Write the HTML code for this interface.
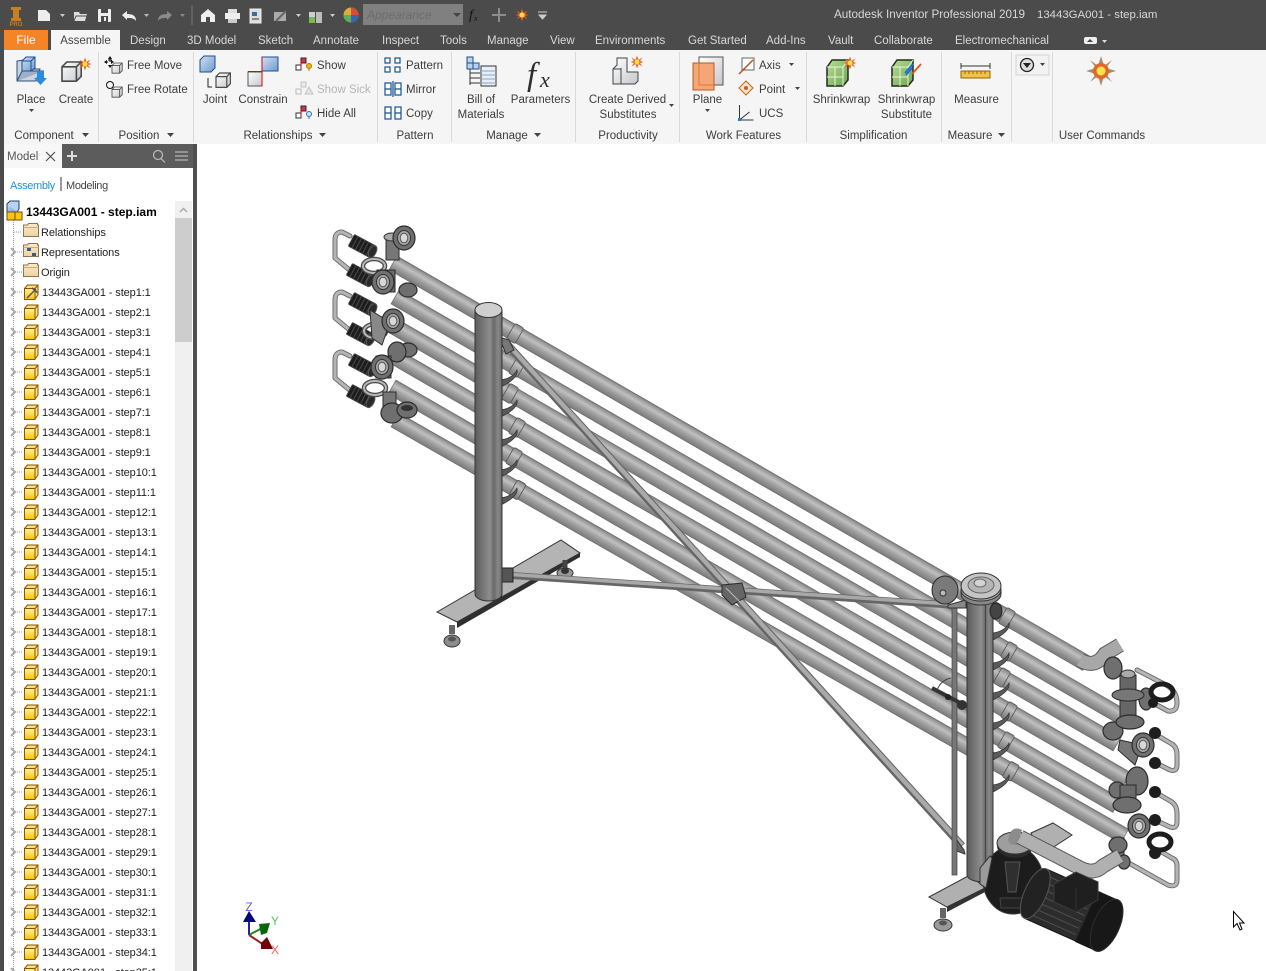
<!DOCTYPE html>
<html><head><meta charset="utf-8"><title>Autodesk Inventor</title>
<style>
html,body{margin:0;padding:0;background:#fff;overflow:hidden}
svg{display:block;font-family:"Liberation Sans",sans-serif}
.t{font-size:11.500px;fill:#3c3c3c}
.m{text-anchor:middle}
.tb{font-size:11.500px;fill:#d8d8d8}
.s{font-size:11px;fill:#1e1e1e;letter-spacing:-.1px}
.u{fill:none;stroke:#666;stroke-width:5;stroke-linejoin:round;stroke-linecap:round}
.u2{fill:none;stroke:#b4b4b4;stroke-width:3.200;stroke-linejoin:round;stroke-linecap:round}
.fl{fill:#6f6f6f;stroke:#2c2c2c;stroke-width:1.200}
.sep{stroke:#d9d9d9;stroke-width:1}
</style></head><body>
<svg width="1266" height="971" viewBox="0 0 1266 971" xmlns="http://www.w3.org/2000/svg">
<defs>
<linearGradient id="pg" x1="0" y1="0" x2="0" y2="1"><stop offset="0" stop-color="#787878"/><stop offset=".12" stop-color="#9a9a9a"/><stop offset=".36" stop-color="#c0c0c0"/><stop offset=".55" stop-color="#a6a6a6"/><stop offset=".8" stop-color="#8c8c8c"/><stop offset="1" stop-color="#7a7a7a"/></linearGradient>
<linearGradient id="cg" x1="0" y1="0" x2="1" y2="0"><stop offset="0" stop-color="#5c5c5c"/><stop offset=".3" stop-color="#777"/><stop offset=".55" stop-color="#8e8e8e"/><stop offset=".7" stop-color="#6a6a6a"/><stop offset=".85" stop-color="#888"/><stop offset="1" stop-color="#6c6c6c"/></linearGradient>
<linearGradient id="yg" x1="0" y1="0" x2="0" y2="1"><stop offset="0" stop-color="#fff3a0"/><stop offset="1" stop-color="#f5c400"/></linearGradient>
<linearGradient id="fg" x1="0" y1="0" x2="0" y2="1"><stop offset="0" stop-color="#fbe9c8"/><stop offset="1" stop-color="#efd3a2"/></linearGradient>
<linearGradient id="gb" x1="0" y1="0" x2="1" y2="1"><stop offset="0" stop-color="#fff"/><stop offset="1" stop-color="#c4c7cc"/></linearGradient>
<linearGradient id="bl" x1="0" y1="0" x2="1" y2="1"><stop offset="0" stop-color="#cfe0f3"/><stop offset="1" stop-color="#6e9ad0"/></linearGradient>
<linearGradient id="gn" x1="0" y1="0" x2="1" y2="1"><stop offset="0" stop-color="#b8dc98"/><stop offset="1" stop-color="#6fa54e"/></linearGradient>
<g id="k"><path d="M11 -4l4 4l-4 4" fill="none" stroke="#a8a8a8" stroke-width="2"/><path d="M17 0h5" stroke="#999" stroke-dasharray="1 1" fill="none"/></g>
<g id="cube"><path d="M24.500 -3.500l3-3.500h10.500v10l-3 4z" fill="#f9e27a" stroke="#8f5100"/><rect x="24.500" y="-3.500" width="10.500" height="11" fill="url(#yg)" stroke="#8f5100"/><path d="M35 -3.500l3-3.500" stroke="#8f5100"/></g>
<g id="fold"><path d="M23.500 -4.500v-2.500h4l1 -1.500h9v1.500h1v11.500h-15z" fill="url(#fg)" stroke="#8c7550"/><path d="M23.500 -4.500h15" stroke="#c9ad7d"/></g>
<g id="spark"><path d="M0-6.500L1.500-2L5.500-4.500L3-1L6.500 0L3 1L5.500 4.500L1.500 2L0 6.500L-1.500 2L-5.500 4.500L-3 1L-6.500 0L-3-1L-5.500-4.500L-1.500-2z" fill="#ef5a1e"/><circle r="2.500" fill="#ffe23d"/></g>
<g id="cb"><path d="M0 3l3-3h9v9l-3 3H0z" fill="url(#gb)" stroke="#4a4a4a"/><path d="M0 3h9v9M9 3l3-3" fill="none" stroke="#4a4a4a"/></g>
<g id="bk"><rect x="-12" y="-6.500" width="24" height="13" rx="1" fill="#1d1d1d" stroke="#3e3e3e"/><path d="M-8-6.500v13M-4-6.500v13M0-6.500v13M4-6.500v13M8-6.500v13" stroke="#4a4a4a" stroke-width="1"/><ellipse cx="12" cy="0" rx="3.500" ry="6.500" fill="#2a2a2a" stroke="#555"/></g>
<g id="flg"><ellipse rx="11" ry="12" class="fl"/><ellipse rx="6.500" ry="7.500" fill="#a8a8a8" stroke="#333"/><ellipse rx="3.800" ry="4.800" fill="#d8d8d8" stroke="#555"/></g>
<g id="ring"><ellipse rx="11" ry="7" fill="none" stroke="#4a4a4a" stroke-width="4.500"/><ellipse rx="11" ry="7" fill="none" stroke="#b8b8b8" stroke-width="2"/></g>
<g id="blring"><ellipse rx="11" ry="8" fill="none" stroke="#1d1d1d" stroke-width="5"/></g>
<g id="sl"><rect x="136" y="-9" width="10" height="18" rx="2" fill="url(#pg)" stroke="#555" stroke-width=".8"/><rect x="704" y="-9" width="10" height="18" rx="2" fill="url(#pg)" stroke="#555" stroke-width=".8"/></g>
<path id="rb" d="M0 0q12 -2 16 -10q2 8 -16 17z" fill="#5a5a5a" stroke="#2f2f2f" stroke-width=".7"/>
</defs>

<!-- chrome -->
<rect width="1266" height="971" fill="#fff"/>
<rect width="1266" height="50" fill="#4b4b4b"/>
<rect x="0" y="0" width="4" height="971" fill="#4b4b4b"/>
<rect x="4" y="50" width="1262" height="94" fill="#f5f5f5"/>
<rect x="4" y="30" width="44" height="20" fill="#f58426"/>
<rect x="51" y="30" width="69" height="20" fill="#f5f5f5"/>
<text x="26" y="44" class="m" font-size="12" fill="#fff">File</text>
<text x="85.500" y="44" class="m" font-size="11.500" fill="#444">Assemble</text>
<g class="tb">
<text x="130" y="44">Design</text><text x="187" y="44">3D Model</text><text x="258" y="44">Sketch</text><text x="313" y="44">Annotate</text><text x="382" y="44">Inspect</text><text x="440" y="44">Tools</text><text x="487" y="44">Manage</text><text x="550" y="44">View</text><text x="595" y="44">Environments</text><text x="688" y="44">Get Started</text><text x="766" y="44">Add-Ins</text><text x="828" y="44">Vault</text><text x="874" y="44">Collaborate</text><text x="955" y="44">Electromechanical</text>
<text x="834" y="18" font-size="11.700">Autodesk Inventor Professional 2019</text><text x="1037" y="18" font-size="11.400">13443GA001 - step.iam</text>
</g>
<rect x="1084" y="37" width="13" height="7" rx="2" fill="#eee"/><path d="M1087 42l3-3l3 3z" fill="#444"/><path d="M1102 40h5l-2.500 3z" fill="#ddd"/>

<!-- quick access -->
<path d="M11 7h10v3h-2v8h2v3h-10v-3h2v-8h-2z" fill="#c87f1e"/><text x="16" y="26" class="m" font-size="6" font-weight="bold" fill="#c87f1e">PRO</text>
<path d="M38 10h8l4 4v7h-12z" fill="#eee"/><path d="M60 14h5l-2.500 3z" fill="#ccc"/>
<path d="M74 12h5l1 2h7l-2 7h-11z" fill="#ddd"/><path d="M74 21l2-5h12" fill="none" stroke="#4b4b4b"/>
<rect x="98" y="9" width="13" height="13" rx="1" fill="#eee"/><rect x="101" y="9" width="7" height="4" fill="#4b4b4b"/><rect x="101" y="16" width="7" height="6" fill="#4b4b4b"/><rect x="104" y="17" width="2" height="4" fill="#eee"/>
<path d="M122 15l5-4v3c6 0 9 2 9 7c-2-3-5-3-9-3v2z" fill="#eee"/><path d="M144 14h5l-2.500 3z" fill="#bbb"/>
<path d="M172 15l-5-4v3c-6 0-9 2-9 7c2-3 5-3 9-3v2z" fill="#8a8a8a"/><path d="M180 14h5l-2.500 3z" fill="#8a8a8a"/>
<path d="M192 5v20" stroke="#777"/>
<path d="M201 15l7-6l7 6v7h-5v-5h-4v5h-5z" fill="#eee"/>
<rect x="225" y="13" width="15" height="6" fill="#eee"/><rect x="228" y="9" width="9" height="4" fill="#ddd"/><rect x="228" y="19" width="9" height="4" fill="#ccc"/>
<rect x="250" y="9" width="11" height="14" fill="#ddd" stroke="#eee"/><rect x="252" y="12" width="5" height="4" fill="#3e6c9e"/><path d="M252 19h7" stroke="#333"/>
<path d="M274 12h12v9h-12z" fill="#aaa"/><path d="M276 21l10-10" stroke="#666" stroke-width="2"/><path d="M296 14h5l-2.500 3z" fill="#ccc"/>
<rect x="309" y="12" width="6" height="5" fill="#cfcfcf"/><rect x="309" y="17" width="6" height="6" fill="#7db94d"/><rect x="316" y="12" width="6" height="11" fill="#eee" opacity=".7"/><path d="M330 14h5l-2.500 3z" fill="#ccc"/>
<circle cx="351" cy="15" r="7.500" fill="#d3b436"/><path d="M351 15V7.500a7.500 7.500 0 0 1 7.500 7.500z" fill="#d94a3a"/><path d="M351 15h7.500a7.500 7.500 0 0 1-7.500 7.500z" fill="#3565b5"/><path d="M351 15v7.500a7.500 7.500 0 0 1-7.500-7.500z" fill="#5fae57"/>
<rect x="363" y="4" width="100" height="21" fill="#808080"/><text x="367" y="19" font-size="12" font-style="italic" fill="#6c6c6c">Appearance</text><path d="M453 13h8l-4 4z" fill="#444"/>
<text x="469" y="19" font-size="14" font-style="italic" font-family="Liberation Serif" fill="#111">f</text><text x="474" y="21" font-size="8" font-style="italic" font-family="Liberation Serif" fill="#111">x</text>
<path d="M499 8v14M492 15h14" stroke="#8c8c8c" stroke-width="2"/>
<use href="#spark" x="522" y="15"/>
<path d="M538 12h9M539 15h7l-3.500 4z" stroke="#ccc" fill="#ccc"/>

<!-- ribbon separators -->
<g class="sep"><path d="M98.500 52v90M193.500 52v90M377.500 52v90M451.500 52v90M575.500 52v90M679.500 52v90M806.500 52v90M941.500 52v90M1011.500 52v90M1052.500 52v90"/></g>

<!-- ribbon labels -->
<g class="t">
<text x="31" y="103" class="m">Place</text><text x="76" y="103" class="m">Create</text>
<text x="127" y="69">Free Move</text><text x="127" y="93">Free Rotate</text>
<text x="215" y="103" class="m">Joint</text><text x="263" y="103" class="m">Constrain</text>
<text x="317" y="69">Show</text><text x="317" y="93" style="fill:#b5b5b5">Show Sick</text><text x="317" y="117">Hide All</text>
<text x="406" y="69">Pattern</text><text x="406" y="93">Mirror</text><text x="406" y="117">Copy</text>
<text x="481" y="103" class="m">Bill of</text><text x="481" y="118" class="m">Materials</text><text x="540.500" y="103" class="m">Parameters</text>
<text x="627.500" y="103" class="m">Create Derived</text><text x="628" y="118" class="m">Substitutes</text>
<text x="707.500" y="103" class="m">Plane</text>
<text x="759" y="69">Axis</text><text x="759" y="93">Point</text><text x="759" y="117">UCS</text>
<text x="841.500" y="103" class="m">Shrinkwrap</text><text x="906.500" y="103" class="m">Shrinkwrap</text><text x="906.500" y="118" class="m">Substitute</text>
<text x="976.500" y="103" class="m">Measure</text>
<text x="44" y="139" class="m">Component</text><text x="139" y="139" class="m">Position</text><text x="278" y="139" class="m">Relationships</text><text x="415" y="139" class="m">Pattern</text><text x="507" y="139" class="m">Manage</text><text x="628" y="139" class="m">Productivity</text><text x="743.500" y="139" class="m">Work Features</text><text x="873.500" y="139" class="m">Simplification</text><text x="970" y="139" class="m">Measure</text><text x="1102" y="139" class="m">User Commands</text>
</g>
<g fill="#444"><path d="M82 133h7l-3.500 4zM167 133h7l-3.500 4zM319 133h7l-3.500 4zM534 133h7l-3.500 4zM998 133h7l-3.500 4z"/><path d="M29 109h5l-2.500 3zM705 109h5l-2.500 3zM669 104h5l-2.500 3zM789 63h5l-2.500 3zM795 87h5l-2.500 3z"/></g>

<!-- ribbon icons -->
<path d="M17 74v-13l7 -1v9h16l-4 12h-19z" fill="#cbd5e2" stroke="#2b4d7a"/><path d="M17 81l5-10h22" fill="#9fb0c4" stroke="#2b4d7a"/>
<path d="M22 61l4-4h9v11l-4 3h-9z" fill="url(#bl)" stroke="#1f4f8e"/><path d="M22 61h9v10M31 61l4-4" fill="none" stroke="#1f4f8e"/>
<rect x="37" y="71" width="7" height="8" fill="#2b8be0"/><path d="M34 78h13l-6.500 7z" fill="#2b8be0"/>
<use href="#cb" transform="translate(62 62) scale(1.600)"/><use href="#spark" x="85" y="64"/>
<path d="M108 60h4M110 58v4M106 62l2 0" stroke="#111"/><path d="M110 56l2 3h-4zM110 68l2-3h-4zM104 62l3-2v4zM114 62l-3-2v4z" fill="#111"/><use href="#cb" transform="translate(112 63) scale(.85)"/>
<circle cx="110" cy="85" r="3.500" fill="none" stroke="#111"/><use href="#cb" transform="translate(112 87) scale(.85)"/>
<path d="M200 60l4-4h11v12l-4 4h-11z" fill="url(#bl)" stroke="#1f4f8e"/><path d="M208 78v9h4" stroke="#222" fill="none"/><use href="#cb" transform="translate(216 73) scale(1.200)"/>
<rect x="262" y="57" width="16" height="14" fill="url(#bl)" stroke="#1f4f8e"/><rect x="248" y="72" width="14" height="14" fill="url(#gb)" stroke="#555"/><path d="M262 57v29M248 71.500h14" stroke="#e00000" fill="none"/>
<g><rect x="296" y="65" width="5" height="5" fill="#fff" stroke="#333"/><rect x="301" y="58" width="5" height="5" fill="#d33" stroke="#225"/><path d="M301 67v-6" stroke="#c00"/><circle cx="309" cy="66" r="2.500" fill="#f4b400" stroke="#b97600"/><path d="M309 69v2" stroke="#b97600"/></g>
<g opacity=".3"><rect x="296" y="89" width="5" height="5" fill="#fff" stroke="#333"/><rect x="301" y="82" width="5" height="5" fill="#ccc" stroke="#555"/><path d="M309 87l4 7h-8z" fill="#bbb" stroke="#555"/></g>
<g><rect x="296" y="113" width="5" height="5" fill="#fff" stroke="#333"/><rect x="301" y="106" width="5" height="5" fill="#d33" stroke="#225"/><path d="M301 115v-6" stroke="#c00"/><circle cx="309" cy="114" r="2.500" fill="#cfe2f7" stroke="#2d73b5"/><path d="M309 117v2" stroke="#2d73b5"/></g>
<g fill="#fff" stroke="#14508f" stroke-width="1.200"><rect x="385" y="58" width="5" height="5"/><rect x="395" y="58" width="5" height="5"/><rect x="385" y="67" width="5" height="5"/><rect x="395" y="67" width="5" height="5"/><rect x="385" y="83" width="6" height="12"/><rect x="395" y="83" width="6" height="12"/><path d="M385 89h6M395 89h6M393 81v16" fill="none"/><rect x="385" y="107" width="6" height="12"/><rect x="395" y="107" width="6" height="12"/><path d="M385 113h6M395 113h6" fill="none"/></g>
<rect x="467" y="57" width="6" height="6" fill="#b9d2ef" stroke="#1f4f8e"/><rect x="467" y="63" width="6" height="6" fill="#b9d2ef" stroke="#1f4f8e"/><rect x="473" y="63" width="6" height="6" fill="#b9d2ef" stroke="#1f4f8e"/><path d="M470 69v16M470 73h10M470 78h10M470 83h10" stroke="#333" fill="none"/><rect x="481" y="66" width="15" height="20" fill="#e7eff8" stroke="#333"/><path d="M481 71h15M481 75h15M481 79h15M481 83h15" stroke="#8aa5c5"/>
<text x="527" y="85" font-family="Liberation Serif" font-size="33" font-style="italic" fill="#2d2d2d">f</text><text x="540" y="87" font-family="Liberation Serif" font-size="22" font-style="italic" fill="#2d2d2d">x</text>
<path d="M613 69l4-4v-7h10v14h11v9l-3 3h-22z" fill="url(#gb)" stroke="#444"/><path d="M613 69h8v-1M621 69v15" fill="none" stroke="#444"/><use href="#spark" x="637" y="62"/>
<rect x="699" y="57" width="24" height="28" fill="url(#gb)" stroke="#555"/><rect x="693" y="63" width="21" height="27" fill="#f5a677" stroke="#bb5a1a"/><path d="M699 63v22h15" fill="none" stroke="#d47a3a"/>
<rect x="742" y="58" width="12" height="12" fill="#fff" stroke="#666"/><path d="M739 74l14-14" stroke="#b0531e" stroke-width="1.500"/>
<path d="M746 81l7 7l-7 7l-7-7z" fill="#fbe4cc" stroke="#c2621b"/><circle cx="746" cy="88" r="2" fill="#c2621b"/>
<path d="M739.500 105v15h14M739.500 120l10-8" fill="none" stroke="#333"/><rect x="738" y="118" width="3" height="3" fill="#1e7fd6"/>
<g id="sw"><path d="M827 67l5-7h16v20l-5 6h-16z" fill="url(#gn)" stroke="#1c2e14" stroke-width="1.500"/><path d="M827 77h16M835 67v19M843 67v19M827 67h16M843 67l5-7" fill="none" stroke="#e8f4dc"/></g><use href="#spark" x="850" y="63"/>
<use href="#sw" x="65"/><path d="M906 75l6-7M905 73l8 -9" stroke="#1e6fd6" stroke-width="1.800"/><path d="M912 74l9-10" stroke="#e0541e" stroke-width="1.800"/>
<path d="M961 63v6M990 63v6M961 66h29" fill="none" stroke="#333"/><rect x="961" y="71" width="29" height="7" fill="#f2c14a" stroke="#8c6500"/><path d="M965 71v3M969 71v3M973 71v3M977 71v3M981 71v3M985 71v3" stroke="#8c6500"/>
<rect x="1016" y="55" width="33" height="20" fill="#f2f2f2" stroke="#d3d3d3"/><circle cx="1027" cy="65" r="6.500" fill="#ddd" stroke="#222" stroke-width="1.300"/><path d="M1023 63h8l-4 5z" fill="#222"/><path d="M1040 63h5l-2.500 3z" fill="#444"/>
<g transform="translate(1101 71)"><path d="M0-15L3-5L11-11L5-3L15 0L5 3L11 11L3 5L0 15L-3 5L-11 11L-5 3L-15 0L-5-3L-11-11L-3-5z" fill="#a88a72"/><circle r="8" fill="#e2672c"/><circle r="4.500" fill="#ffe54a"/></g>

<!-- browser -->
<rect x="4" y="144" width="58" height="24" fill="#f7f7f7"/>
<rect x="62" y="144" width="131" height="24" fill="#5c5c5c"/>
<rect x="193" y="144" width="4" height="827" fill="#4f4f4f"/>
<text x="7" y="160" font-size="11.500" fill="#555">Model</text>
<path d="M46 152l9 9M55 152l-9 9" stroke="#444" stroke-width="1"/>
<path d="M72 151v10M67 156h10" stroke="#ddd" stroke-width="2"/>
<circle cx="158" cy="155" r="4.500" fill="none" stroke="#bbb" stroke-width="1.200"/><path d="M161 158.500l4 4" stroke="#bbb" stroke-width="1.200"/>
<path d="M175 152h13M175 156h13M175 160h13" stroke="#ccc" stroke-width="1"/>
<text x="10" y="189" font-size="11" letter-spacing="-.35" fill="#2192d9">Assembly</text><rect x="60" y="177" width="2" height="14" fill="#999"/><text x="66" y="189" font-size="11" letter-spacing="-.35" fill="#444">Modeling</text>
<rect x="175" y="201" width="17" height="770" fill="#f0f0f0"/><rect x="175" y="218" width="17" height="124" fill="#cdcdcd"/><path d="M180 212l3.500-3.500l3.500 3.500" fill="none" stroke="#aaa" stroke-width="1.500"/>
<path d="M13.500 220V971" stroke="#999" stroke-dasharray="1 1"/>

<g transform="translate(0 212)"><rect x="7" y="-8" width="10" height="8" fill="url(#bl)" stroke="#1b3f73"/><path d="M7 -8l3-3h9v8l-2 3" fill="#b9d2ef" stroke="#1b3f73"/><rect x="7" y="0" width="8" height="8" fill="#f9c80e" stroke="#7a4a00"/><rect x="15" y="0" width="7" height="8" fill="#f9c80e" stroke="#7a4a00"/></g>
<text x="26" y="216" font-size="12" font-weight="bold" fill="#000">13443GA001 - step.iam</text>
<path d="M14 232h8" stroke="#999" stroke-dasharray="1 1"/><use href="#fold" y="232"/><text x="41" y="236" class="s">Relationships</text>
<use href="#k" y="252"/><use href="#fold" y="252"/><rect x="27" y="248" width="4" height="3" fill="#3a5a8c"/><rect x="32" y="253" width="4" height="3" fill="#3a5a8c"/><text x="41" y="256" class="s">Representations</text>
<use href="#k" y="272"/><use href="#fold" y="272"/><text x="41" y="276" class="s">Origin</text>
<use href="#k" y="292"/><use href="#cube" y="292"/><path d="M27 298l9-9M32 288l6 5" stroke="#555" stroke-width="1.500"/><text x="42" y="296" class="s">13443GA001 - step1:1</text>
<use href="#k" y="312"/><use href="#cube" y="312"/><text x="42" y="316" class="s">13443GA001 - step2:1</text>
<use href="#k" y="332"/><use href="#cube" y="332"/><text x="42" y="336" class="s">13443GA001 - step3:1</text>
<use href="#k" y="352"/><use href="#cube" y="352"/><text x="42" y="356" class="s">13443GA001 - step4:1</text>
<use href="#k" y="372"/><use href="#cube" y="372"/><text x="42" y="376" class="s">13443GA001 - step5:1</text>
<use href="#k" y="392"/><use href="#cube" y="392"/><text x="42" y="396" class="s">13443GA001 - step6:1</text>
<use href="#k" y="412"/><use href="#cube" y="412"/><text x="42" y="416" class="s">13443GA001 - step7:1</text>
<use href="#k" y="432"/><use href="#cube" y="432"/><text x="42" y="436" class="s">13443GA001 - step8:1</text>
<use href="#k" y="452"/><use href="#cube" y="452"/><text x="42" y="456" class="s">13443GA001 - step9:1</text>
<use href="#k" y="472"/><use href="#cube" y="472"/><text x="42" y="476" class="s">13443GA001 - step10:1</text>
<use href="#k" y="492"/><use href="#cube" y="492"/><text x="42" y="496" class="s">13443GA001 - step11:1</text>
<use href="#k" y="512"/><use href="#cube" y="512"/><text x="42" y="516" class="s">13443GA001 - step12:1</text>
<use href="#k" y="532"/><use href="#cube" y="532"/><text x="42" y="536" class="s">13443GA001 - step13:1</text>
<use href="#k" y="552"/><use href="#cube" y="552"/><text x="42" y="556" class="s">13443GA001 - step14:1</text>
<use href="#k" y="572"/><use href="#cube" y="572"/><text x="42" y="576" class="s">13443GA001 - step15:1</text>
<use href="#k" y="592"/><use href="#cube" y="592"/><text x="42" y="596" class="s">13443GA001 - step16:1</text>
<use href="#k" y="612"/><use href="#cube" y="612"/><text x="42" y="616" class="s">13443GA001 - step17:1</text>
<use href="#k" y="632"/><use href="#cube" y="632"/><text x="42" y="636" class="s">13443GA001 - step18:1</text>
<use href="#k" y="652"/><use href="#cube" y="652"/><text x="42" y="656" class="s">13443GA001 - step19:1</text>
<use href="#k" y="672"/><use href="#cube" y="672"/><text x="42" y="676" class="s">13443GA001 - step20:1</text>
<use href="#k" y="692"/><use href="#cube" y="692"/><text x="42" y="696" class="s">13443GA001 - step21:1</text>
<use href="#k" y="712"/><use href="#cube" y="712"/><text x="42" y="716" class="s">13443GA001 - step22:1</text>
<use href="#k" y="732"/><use href="#cube" y="732"/><text x="42" y="736" class="s">13443GA001 - step23:1</text>
<use href="#k" y="752"/><use href="#cube" y="752"/><text x="42" y="756" class="s">13443GA001 - step24:1</text>
<use href="#k" y="772"/><use href="#cube" y="772"/><text x="42" y="776" class="s">13443GA001 - step25:1</text>
<use href="#k" y="792"/><use href="#cube" y="792"/><text x="42" y="796" class="s">13443GA001 - step26:1</text>
<use href="#k" y="812"/><use href="#cube" y="812"/><text x="42" y="816" class="s">13443GA001 - step27:1</text>
<use href="#k" y="832"/><use href="#cube" y="832"/><text x="42" y="836" class="s">13443GA001 - step28:1</text>
<use href="#k" y="852"/><use href="#cube" y="852"/><text x="42" y="856" class="s">13443GA001 - step29:1</text>
<use href="#k" y="872"/><use href="#cube" y="872"/><text x="42" y="876" class="s">13443GA001 - step30:1</text>
<use href="#k" y="892"/><use href="#cube" y="892"/><text x="42" y="896" class="s">13443GA001 - step31:1</text>
<use href="#k" y="912"/><use href="#cube" y="912"/><text x="42" y="916" class="s">13443GA001 - step32:1</text>
<use href="#k" y="932"/><use href="#cube" y="932"/><text x="42" y="936" class="s">13443GA001 - step33:1</text>
<use href="#k" y="952"/><use href="#cube" y="952"/><text x="42" y="956" class="s">13443GA001 - step34:1</text>
<use href="#k" y="972"/><use href="#cube" y="972"/><text x="42" y="976" class="s">13443GA001 - step35:1</text>

<!-- ========= 3D model ========= -->
<!-- left base -->
<path d="M457 622L580 553v4L457 628z" fill="#2f2f2f"/><path d="M437 612L561 540L580 553L457 622z" fill="#b4b4b4" stroke="#333"/>
<path d="M452 625v9" stroke="#666" stroke-width="6"/><ellipse cx="452" cy="641" rx="8" ry="6" fill="#8c8c8c" stroke="#333"/><ellipse cx="452" cy="639" rx="4" ry="2.500" fill="#555"/>
<path d="M565 560v8" stroke="#444" stroke-width="5"/><ellipse cx="565" cy="573" rx="8" ry="5" fill="#999" stroke="#333"/><ellipse cx="565" cy="571" rx="4" ry="3" fill="#333"/>

<!-- pipes -->
<rect transform="translate(393 263) rotate(30)" width="801" y="-8" height="16" fill="url(#pg)" stroke="#666" stroke-width=".6"/>
<rect transform="translate(395 297) rotate(30)" width="840" y="-8" height="16" fill="url(#pg)" stroke="#666" stroke-width=".6"/>
<rect transform="translate(388 323) rotate(30)" width="842" y="-8" height="16" fill="url(#pg)" stroke="#666" stroke-width=".6"/>
<rect transform="translate(395 357) rotate(30)" width="845" y="-8" height="16" fill="url(#pg)" stroke="#666" stroke-width=".6"/>
<rect transform="translate(392 387) rotate(30)" width="837" y="-8" height="16" fill="url(#pg)" stroke="#666" stroke-width=".6"/>
<rect transform="translate(395 420) rotate(29.700)" width="840" y="-8" height="16" fill="url(#pg)" stroke="#666" stroke-width=".6"/>
<use href="#sl" transform="translate(393 263) rotate(30)"/><use href="#sl" transform="translate(395 297) rotate(30)"/><use href="#sl" transform="translate(388 323) rotate(30)"/><use href="#sl" transform="translate(395 357) rotate(30)"/><use href="#sl" transform="translate(392 387) rotate(30)"/><use href="#sl" transform="translate(395 420) rotate(29.700)"/>

<!-- ribs -->
<use href="#rb" x="501" y="380"/><use href="#rb" x="501" y="410"/><use href="#rb" x="501" y="440"/><use href="#rb" x="501" y="470"/><use href="#rb" x="501" y="498"/>
<use href="#rb" x="993" y="633"/><use href="#rb" x="993" y="663"/><use href="#rb" x="993" y="693"/><use href="#rb" x="993" y="723"/><use href="#rb" x="993" y="753"/><use href="#rb" x="993" y="785"/>

<!-- left manifolds -->
<g>
<path class="u" d="M350 236L342 232Q335 232 335 240V258L352 272"/><path class="u2" d="M350 236L342 232Q335 232 335 240V258L352 272"/>
<path class="u" d="M350 296L342 292Q335 292 335 300V318L352 332"/><path class="u2" d="M350 296L342 292Q335 292 335 300V318L352 332"/>
<path class="u" d="M350 356L342 352Q335 352 335 360V378L352 392"/><path class="u2" d="M350 356L342 352Q335 352 335 360V378L352 392"/>
<use href="#bk" transform="translate(362 246) rotate(28)"/><use href="#bk" transform="translate(360 275) rotate(28)"/><use href="#bk" transform="translate(362 304) rotate(28)"/><use href="#bk" transform="translate(360 334) rotate(28)"/><use href="#bk" transform="translate(362 365) rotate(28)"/><use href="#bk" transform="translate(360 396) rotate(28)"/>
<use href="#ring" x="374" y="266"/><use href="#ring" x="375" y="331"/><use href="#ring" x="375" y="388"/>
<rect x="386" y="238" width="13" height="22" fill="#777" stroke="#2c2c2c"/><ellipse cx="392" cy="237" rx="8" ry="4" fill="#aaa" stroke="#2c2c2c"/><use href="#flg" x="404" y="238"/>
<rect x="377" y="270" width="18" height="22" fill="#6a6a6a" stroke="#2c2c2c"/><use href="#flg" x="383" y="282"/><ellipse cx="408" cy="290" rx="9" ry="7" class="fl"/>
<path d="M370 310L390 322L382 345L372 338z" fill="#888" stroke="#2c2c2c"/><use href="#flg" x="393" y="321"/><ellipse cx="408" cy="350" rx="9" ry="7" class="fl"/><ellipse cx="397" cy="352" rx="9" ry="10" class="fl"/>
<rect x="376" y="356" width="15" height="22" fill="#6a6a6a" stroke="#2c2c2c"/><use href="#flg" x="382" y="367"/>
<rect x="383" y="392" width="13" height="22" fill="#777" stroke="#2c2c2c"/><ellipse cx="392" cy="413" rx="11" ry="10" class="fl"/><ellipse cx="407" cy="410" rx="10" ry="8" class="fl"/><ellipse cx="407" cy="408" rx="6" ry="3" fill="#333"/>
</g>

<!-- braces -->
<path d="M505 575L950 605" stroke="#666" stroke-width="7"/><path d="M505 574L950 604" stroke="#a8a8a8" stroke-width="3.500"/>
<path d="M505 342L962 846" stroke="#666" stroke-width="8"/><path d="M505 341L962 845" stroke="#aaa" stroke-width="4.500"/>
<path d="M722 585l20-2l4 14l-14 8l-10-10z" fill="#666" stroke="#2a2a2a"/><path d="M726 588l14 14" stroke="#bbb"/>
<rect x="499" y="568" width="14" height="14" fill="#555" stroke="#222"/><path d="M499 337l10 3l5 10l-8 4z" fill="#777" stroke="#333"/>
<path d="M954 850l11 4l-1 -4l-10 -14z" fill="#666" stroke="#333"/>

<!-- left column -->
<path d="M475 310V594A13.500 7 0 0 0 502 594V310" fill="url(#cg)" stroke="#333"/><ellipse cx="488.500" cy="310" rx="13.500" ry="7.500" fill="#cfcfcf" stroke="#333"/>

<!-- right manifolds -->
<path d="M1080 660Q1095 669 1105 654L1120 645" fill="none" stroke="#555" stroke-width="15"/><path d="M1080 660Q1095 669 1105 654L1120 645" fill="none" stroke="#a8a8a8" stroke-width="13"/>
<g>
<path class="u" d="M1137 670L1168 686Q1177 692 1177 703Q1177 712 1168 711L1155 704"/><path class="u2" d="M1137 670L1168 686Q1177 692 1177 703Q1177 712 1168 711L1155 704"/>
<path class="u" d="M1160 737L1172 744Q1177 747 1177 755V765Q1177 772 1170 770L1160 765"/><path class="u2" d="M1160 737L1172 744Q1177 747 1177 755V765Q1177 772 1170 770L1160 765"/>
<path class="u" d="M1160 795L1172 802Q1177 806 1177 813V822Q1177 829 1170 827L1155 820"/><path class="u2" d="M1160 795L1172 802Q1177 806 1177 813V822Q1177 829 1170 827L1155 820"/>
<path class="u" d="M1127 862L1168 885Q1177 888 1177 880V866Q1177 860 1172 858L1160 851"/><path class="u2" d="M1127 862L1168 885Q1177 888 1177 880V866Q1177 860 1172 858L1160 851"/>
<rect x="1120" y="675" width="16" height="48" fill="#666" stroke="#2a2a2a"/><ellipse cx="1128" cy="674" rx="7" ry="4" fill="#aaa" stroke="#333"/>
<ellipse cx="1113" cy="668" rx="9" ry="11" class="fl"/><ellipse cx="1113" cy="731" rx="10" ry="9" class="fl"/><ellipse cx="1146" cy="699" rx="7" ry="11" class="fl"/><ellipse cx="1130" cy="722" rx="14" ry="7" class="fl"/><ellipse cx="1128" cy="695" rx="16" ry="6" fill="#777" stroke="#2a2a2a"/>
<use href="#blring" x="1162" y="692"/><circle cx="1153" cy="703" r="5" fill="#1d1d1d"/>
<path d="M1120 740L1142 745L1135 765L1118 750z" fill="#777" stroke="#2a2a2a"/><use href="#flg" x="1143" y="745"/><circle cx="1155" cy="733" r="6" fill="#1d1d1d"/><circle cx="1155" cy="763" r="6" fill="#1d1d1d"/>
<ellipse cx="1137" cy="781" rx="11" ry="14" class="fl"/><ellipse cx="1117" cy="790" rx="8" ry="8" class="fl"/><rect x="1120" y="785" width="16" height="22" fill="#6a6a6a" stroke="#2a2a2a"/><ellipse cx="1127" cy="805" rx="14" ry="8" class="fl"/><circle cx="1155" cy="792" r="6" fill="#1d1d1d"/>
<use href="#flg" x="1139" y="826"/><rect x="1112" y="838" width="12" height="22" fill="#6a6a6a" stroke="#2a2a2a"/><ellipse cx="1118" cy="845" rx="9" ry="8" class="fl"/><use href="#blring" x="1160" y="842"/><circle cx="1155" cy="820" r="6" fill="#1d1d1d"/><circle cx="1155" cy="853" r="6" fill="#1d1d1d"/><ellipse cx="1124" cy="862" rx="6" ry="7" class="fl"/>
</g>

<!-- right base + plate -->
<path d="M947 907L985 888V892L947 912z" fill="#333"/><path d="M929 897L970 875L985 888L947 907z" fill="#b0b0b0" stroke="#333"/>
<path d="M943 908v10" stroke="#666" stroke-width="6"/><ellipse cx="943" cy="925" rx="9" ry="6" fill="#999" stroke="#333"/><ellipse cx="943" cy="923" rx="4" ry="2.500" fill="#555"/>
<!-- vertical tube and disc -->
<rect x="952" y="605" width="5" height="270" fill="#777" stroke="#444" stroke-width=".7"/>
<path d="M932 688l36 19" stroke="#333" stroke-width="4"/><path d="M937 690q4-10 14-12" fill="none" stroke="#444"/><circle cx="948" cy="697" r="3" fill="#222"/><circle cx="962" cy="705" r="5" fill="#333"/>
<ellipse cx="945" cy="590" rx="13" ry="14" fill="#7a7a7a" stroke="#2a2a2a"/><circle cx="943" cy="593" r="3" fill="#bbb" stroke="#333"/><path d="M948 605l18-5v8h-18z" fill="#888" stroke="#333"/>
<!-- right column -->
<path d="M967 597V875A13 7 0 0 0 985 881L993 880V597z" fill="url(#cg)" stroke="#333"/><rect x="985" y="600" width="1" height="278" fill="#444"/>
<ellipse cx="981" cy="594" rx="20" ry="11" fill="#888" stroke="#333"/><path d="M961 590v4M1001 590v4" stroke="#333"/><ellipse cx="981" cy="590" rx="20" ry="11" fill="#a8a8a8" stroke="#333"/><ellipse cx="981" cy="586" rx="20" ry="13" fill="#c5c5c5" stroke="#333"/><ellipse cx="981" cy="585" rx="13" ry="8" fill="#b5b5b5" stroke="#666"/><ellipse cx="980" cy="583" rx="6" ry="4" fill="#d4d4d4" stroke="#666"/>
<ellipse cx="996" cy="611" rx="6" ry="8" fill="#444" stroke="#222"/>

<!-- pump -->
<path d="M1031 833L1053 823L1072 835L1052 848L1045 848L1036 845z" fill="#b0b0b0" stroke="#333"/>
<ellipse cx="1013" cy="880" rx="30" ry="34" fill="#1c1c1c" stroke="#3a3a3a"/><path d="M1005 862l15 0l-4 30h-8z" fill="#2f2f2f" stroke="#555"/>
<path d="M990 856l-10 12v16l6 4l6-30z" fill="#9a9a9a" stroke="#333"/><path d="M1000 898l25 0l8 10h-32z" fill="#222" stroke="#444"/>
<ellipse cx="1015" cy="846" rx="18" ry="12" fill="#2b2b2b"/><ellipse cx="1015" cy="843" rx="18" ry="11" fill="#9e9e9e" stroke="#333"/><ellipse cx="1016" cy="840" rx="8" ry="5" fill="#8a8a8a"/>
<path d="M1020 837L1080 868Q1094 875 1103 866L1120 856" fill="none" stroke="#555" stroke-width="15"/><path d="M1020 837L1080 868Q1094 875 1103 866L1120 856" fill="none" stroke="#b0b0b0" stroke-width="13"/><path d="M1020 834Q1013 830 1013 842" fill="none" stroke="#8c8c8c" stroke-width="9"/>
<g transform="translate(1070 909) rotate(24)"><rect x="-38" y="-27" width="58" height="54" fill="#2c2c2c" stroke="#161616"/><path d="M-34-21h50M-34-14h50M-34-7h50M-34 0h50M-34 7h50M-34 14h50M-34 21h50" stroke="#4f4f4f"/><ellipse cx="-38" cy="0" rx="11" ry="27" fill="#222" stroke="#555"/><rect x="18" y="-28" width="22" height="56" fill="#161616"/><ellipse cx="40" cy="0" rx="13" ry="28" fill="#181818" stroke="#2e2e2e"/></g>
<path d="M1054 884l22-12l22 10v18l-22 12l-22-10z" fill="#1f1f1f" stroke="#3a3a3a"/><path d="M1076 888v22" stroke="#333"/>

<!-- triad -->
<path d="M249 922V935" stroke="#2020b0" stroke-width="2"/><path d="M249 935l15-8" stroke="#1b8a1b" stroke-width="2"/><path d="M249 935l15 10" stroke="#9b2222" stroke-width="2"/>
<path d="M249 911l7 11h-13z" fill="#06067c"/><path d="M259 924l11-1l-3 10l-6 2z" fill="#0b650b"/><path d="M261 943l6-6l6 12l-12 0z" fill="#6d0505"/>
<text x="249" y="911" class="m" font-size="12" fill="#5c5cf0">Z</text><text x="275" y="925" class="m" font-size="12" fill="#4fc94f">Y</text><text x="275" y="954" class="m" font-size="12" fill="#f06060">X</text>

<!-- cursor -->
<path d="M1233.500 911.500V927L1237 923.500L1240 930L1242 929L1239.500 923H1244z" fill="#fff" stroke="#000"/>
</svg>
</body></html>
